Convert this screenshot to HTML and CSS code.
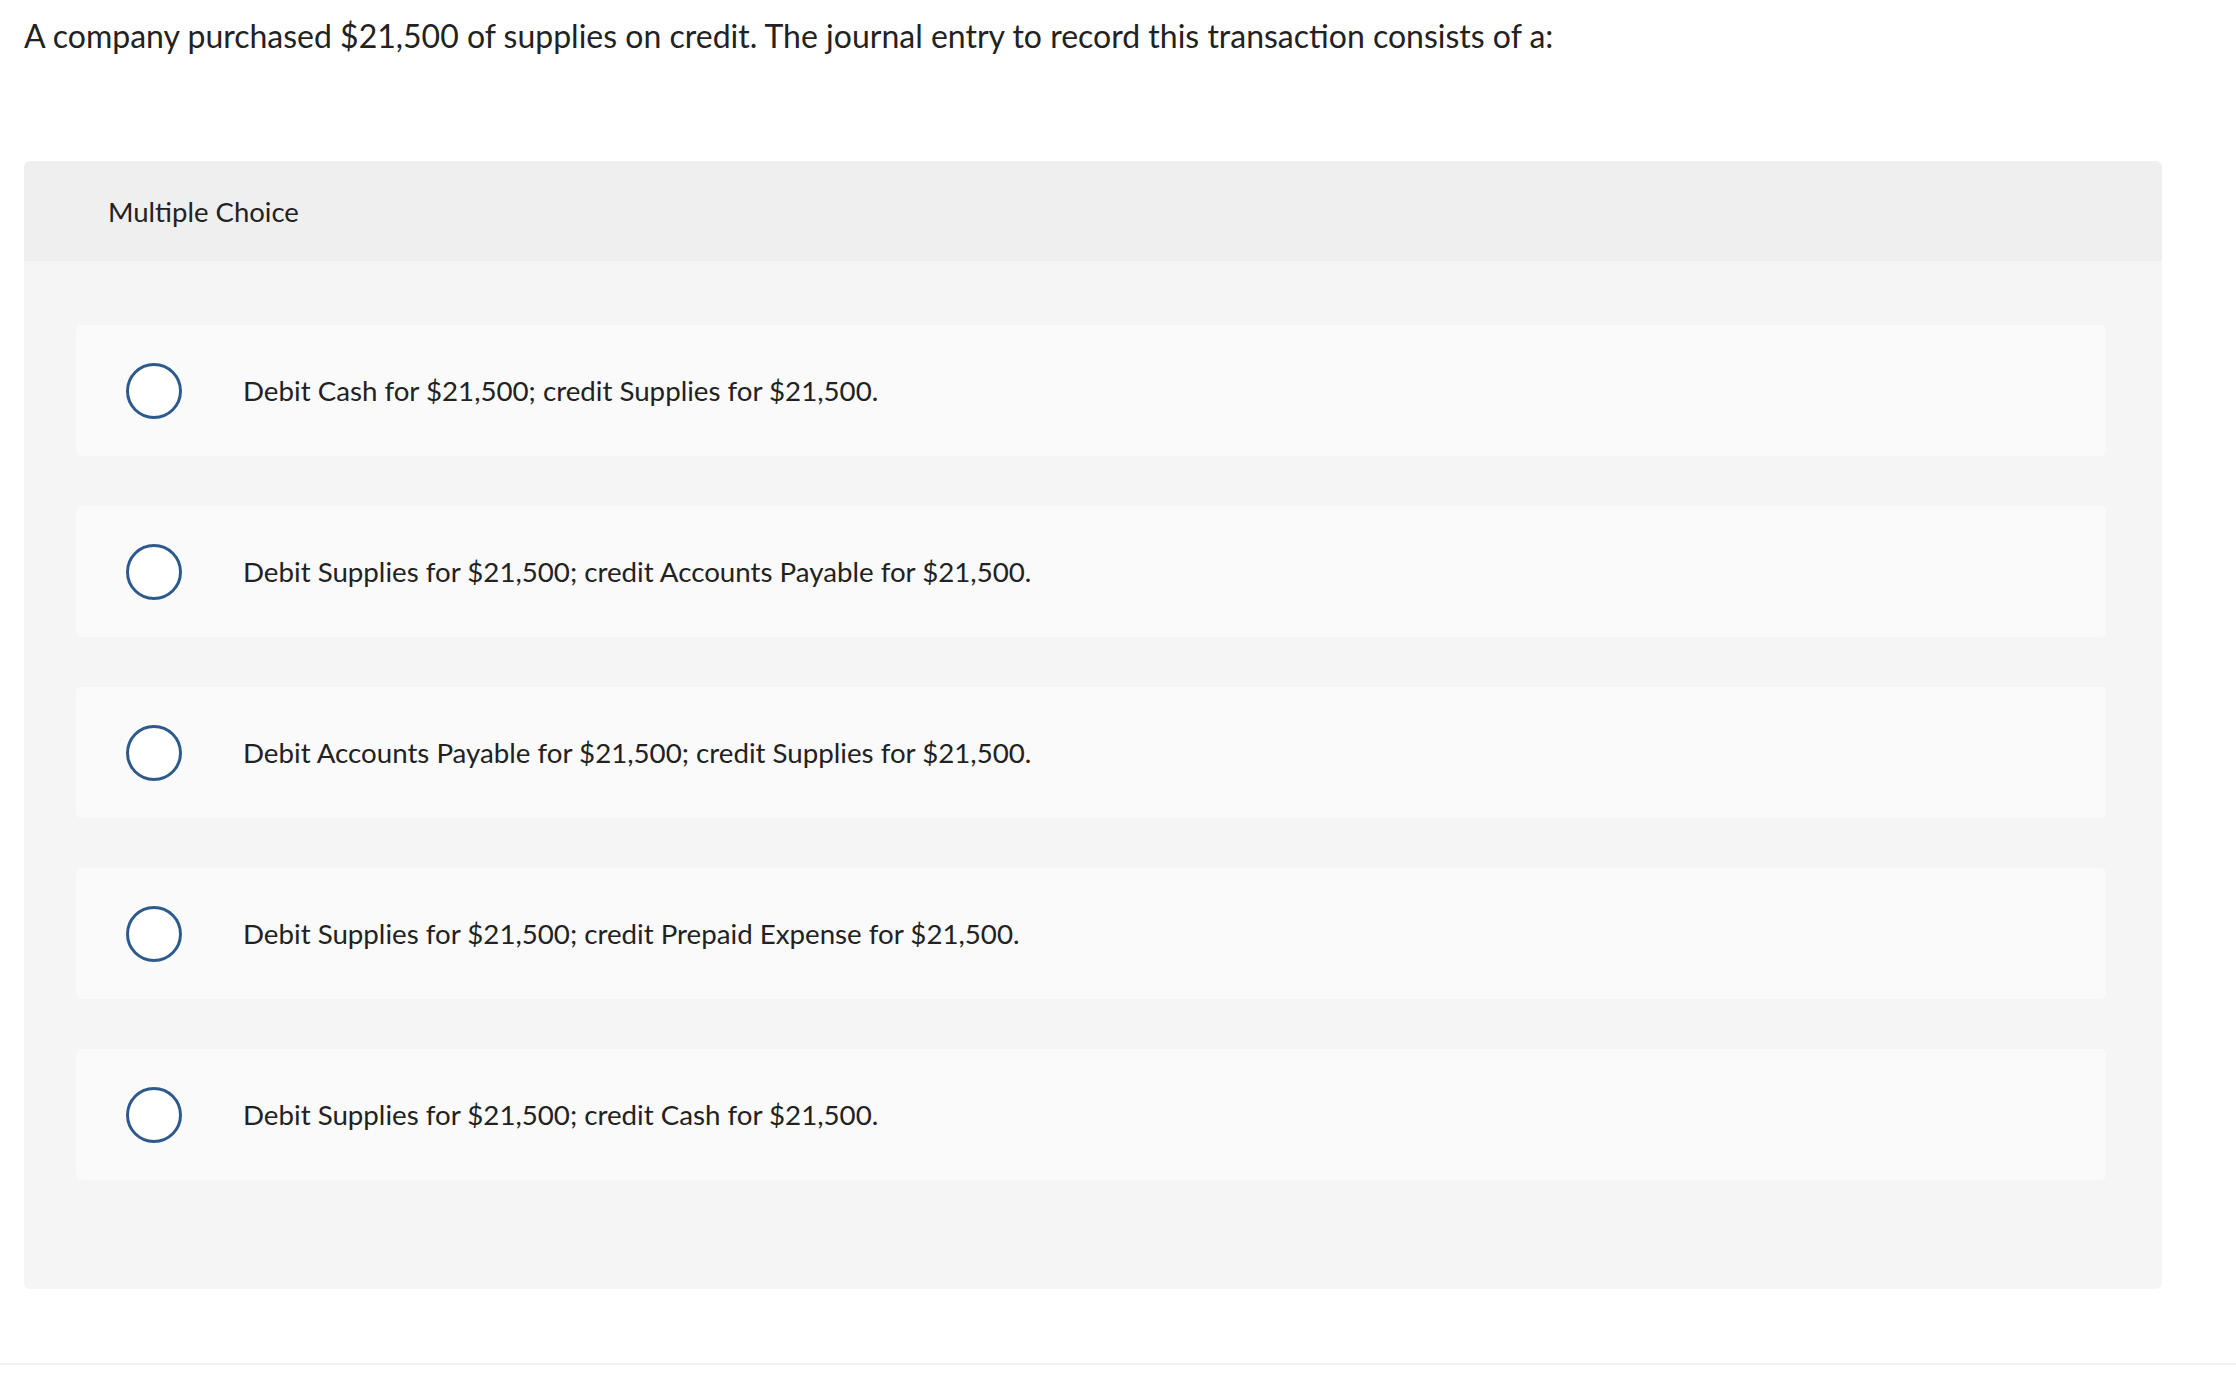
FILE: index.html
```html
<!DOCTYPE html>
<html lang="en">
<head>
    <meta charset="UTF-8">
    <meta name="viewport" content="width=device-width, initial-scale=1.0">
    <title>Question</title>
    <link rel="stylesheet" href="styles.css">
</head>
<body>
    <p class="question">A company purchased $21,500 of supplies on credit. The journal entry to record this transaction consists of a:</p>

    <div class="panel">
        <div class="panel-header">Multiple Choice</div>
        <div class="options">
            <label class="option">
                <input type="radio" name="answer" class="radio">
                <span>Debit Cash for $21,500; credit Supplies for $21,500.</span>
            </label>
            <label class="option">
                <input type="radio" name="answer" class="radio">
                <span>Debit Supplies for $21,500; credit Accounts Payable for $21,500.</span>
            </label>
            <label class="option">
                <input type="radio" name="answer" class="radio">
                <span>Debit Accounts Payable for $21,500; credit Supplies for $21,500.</span>
            </label>
            <label class="option">
                <input type="radio" name="answer" class="radio">
                <span>Debit Supplies for $21,500; credit Prepaid Expense for $21,500.</span>
            </label>
            <label class="option">
                <input type="radio" name="answer" class="radio">
                <span>Debit Supplies for $21,500; credit Cash for $21,500.</span>
            </label>
        </div>
    </div>

    <div class="divider"></div>
</body>
</html>
```

FILE: styles.css
```css
body {
    font-family: Lato, 'Liberation Sans', sans-serif;
    color: #222;
    background: #fff;
    margin: 0;
}
.question {
    margin: 0;
    padding: 16px 24px 0;
    font-size: 32px;
    line-height: 40px;
}
.panel {
    margin: 105px 0 0 24px;
    width: 2138px;
}
.panel-header {
    height: 100px;
    display: flex;
    align-items: center;
    padding-left: 84px;
    font-size: 27.5px;
    background: #efefef;
    border-radius: 6px 6px 0 0;
}
.options {
    display: flex;
    flex-direction: column;
    gap: 50px;
    padding: 64px 56px 109px 52px;
    background: #f5f5f5;
    border-radius: 0 0 6px 6px;
}
.option {
    height: 131px;
    display: flex;
    align-items: center;
    padding-left: 50px;
    background: #fafafa;
    border-radius: 5px;
    font-size: 27.7px;
    cursor: pointer;
}
.radio {
    appearance: none;
    -webkit-appearance: none;
    box-sizing: border-box;
    width: 56px;
    height: 56px;
    margin: 0 61px 0 0;
    border: 3px solid #2d5a8c;
    border-radius: 50%;
    background: #fff;
    flex-shrink: 0;
}
.divider {
    margin-top: 74px;
    height: 2px;
    background: #f2f2f2;
}
```
